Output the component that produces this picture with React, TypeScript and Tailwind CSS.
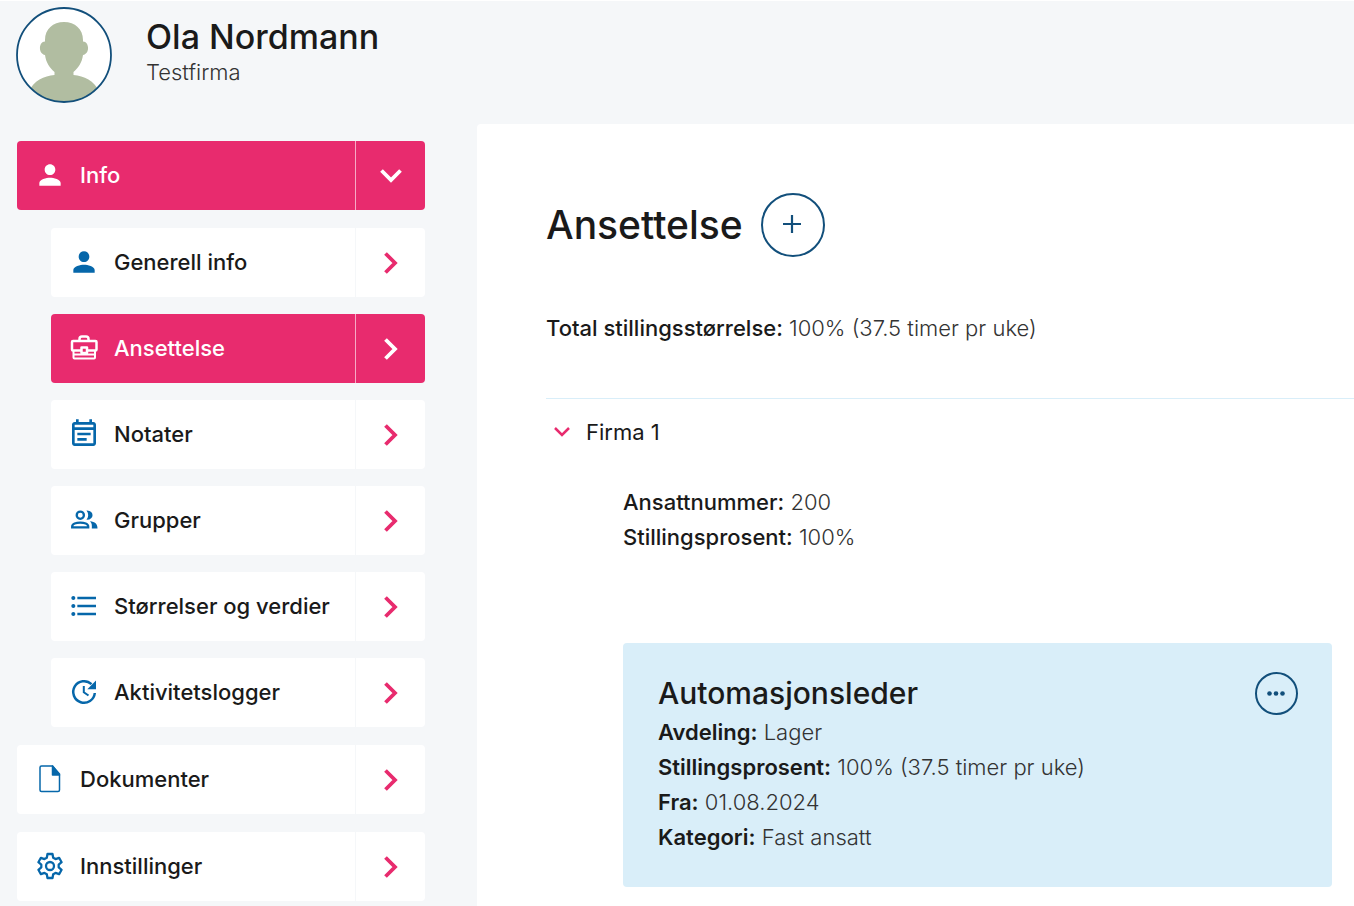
import type { ReactNode } from "react";
import { MdFormatListBulleted, MdOutlineEventNote, MdPerson } from "react-icons/md";

const BriefcaseIcon = () => (
  <svg viewBox="0 0 32 32" className="size-8" fill="none" stroke="currentColor" strokeWidth="2.5" strokeLinejoin="round">
    <path d="M11.500 8V7Q11.500 4.500 14 4.500H18Q20.500 4.500 20.500 7V8" />
    <rect x="4" y="9" width="24.500" height="9.500" rx="1" />
    <path d="M5.500 18.500V25.500Q5.500 26.500 6.500 26.500H26Q27 26.500 27 25.500V18.500M5.500 22.500H27" strokeWidth="2" />
    <rect x="13.500" y="15.500" width="5.500" height="5.500" className="fill-[#e82b6e]" />
  </svg>
);

const GroupIcon = () => (
  <svg viewBox="0 0 32 32" className="size-8" fill="none" stroke="currentColor" strokeWidth="2.3">
    <circle cx="12.300" cy="11.200" r="3.600" />
    <path d="M4.200 23.400V22.500C4.200 17.200 20.200 17.200 20.200 22.500V23.400Z" />
    <path
      d="M18.500 6.500C26.600 6 26.600 16.200 18.500 15.800C20.800 13 20.800 9.300 18.500 6.500ZM22 17.300C27 17.800 29.500 20 29.500 24.500H23.800C24 21 24 19.500 22 17.300Z"
      fill="currentColor"
      stroke="none"
    />
  </svg>
);

const UpdateIcon = () => (
  <svg viewBox="0 0 32 32" className="size-8" fill="none" stroke="currentColor" strokeWidth="2.5">
    <path d="M26.800 17A10.800 10.800 0 1 1 23.500 8.200" />
    <path d="M28 4.500V13.300H19.300Z" fill="currentColor" stroke="none" />
    <path d="M15.800 10V16.200L20.500 19.500" strokeWidth="2" />
  </svg>
);

const DocumentIcon = () => (
  <svg viewBox="0 0 32 32" className="size-8" fill="none" stroke="currentColor" strokeWidth="1.5" strokeLinejoin="round">
    <path d="M7.500 3H18.500L25.500 11V27Q25.500 28.500 24 28.500H7.500Q6 28.500 6 27V4.500Q6 3 7.500 3Z" />
    <path d="M18.500 3V12H25.500Z" fill="currentColor" />
  </svg>
);

const GearIcon = () => (
  <svg viewBox="0 0 32 32" className="size-8" fill="none" stroke="currentColor" strokeWidth="2.3" strokeLinejoin="round">
    <path d="M13.500 4H18.500L19.200 7.800L21.500 9.100L25.100 7.800L27.600 12.200L24.700 14.700V17.300L27.600 19.800L25.100 24.200L21.500 22.900L19.200 24.200L18.500 28H13.500L12.800 24.200L10.500 22.900L6.900 24.200L4.400 19.800L7.300 17.300V14.700L4.400 12.200L6.900 7.800L10.500 9.100L12.800 7.800Z" />
    <circle cx="16" cy="16" r="4" />
  </svg>
);

const Chevron = ({ down = false }: { down?: boolean }) => (
  <svg viewBox="0 0 24 24" className="size-6" fill="none" stroke="currentColor" strokeWidth="3.8">
    <path d={down ? "M2.500 6.500L12 16L21.500 6.500" : "M6.500 2.500L16 12L6.500 21.500"} />
  </svg>
);

type NavItemProps = {
  icon: ReactNode;
  label: string;
  active?: boolean;
  open?: boolean;
};

const NavItem = ({ icon, label, active = false, open = false }: NavItemProps) => (
  <div
    className={
      active
        ? "flex h-[69px] overflow-hidden rounded bg-[#e82b6e] text-white"
        : "flex h-[69px] overflow-hidden rounded bg-white text-[#1a1a1a]"
    }
  >
    <a href="#" className="flex min-w-0 flex-1 items-center gap-3.5 pl-[17px] text-[22px] font-medium">
      <span className={active ? "shrink-0 pb-0.5 text-white" : "shrink-0 pb-0.5 text-[#0667aa]"}>{icon}</span>
      <span className="whitespace-nowrap">{label}</span>
    </a>
    <button
      type="button"
      aria-label={`Vis ${label}`}
      className={
        active
          ? "flex w-[70px] items-center justify-center border-l border-white/60"
          : "flex w-[70px] items-center justify-center border-l border-[#f5f7f9] text-[#e82b6e]"
      }
    >
      <Chevron down={open} />
    </button>
  </div>
);

const Header = () => (
  <header className="flex h-[124px] items-start gap-[34px] border-t border-white pl-4 pt-1.5">
    <svg viewBox="0 0 96 96" className="size-24 shrink-0" role="img" aria-label="Profilbilde">
      <defs>
        <clipPath id="avatar">
          <circle cx="48" cy="48" r="47" />
        </clipPath>
      </defs>
      <circle cx="48" cy="48" r="47" fill="#fff" />
      <g fill="#b1bda1" clipPath="url(#avatar)">
        <path d="M29 33C29 22 37 15 48 15S67 22 67 33V34.500C73.500 34.500 74 47 67 48C66 56 62 61 57.500 65V68C68 69 78 73 84 86V96H12V86C18 73 28 69 38.500 68V65C34 61 30 56 29 48C22 47 22.500 34.500 29 34.500Z" />
      </g>
      <circle cx="48" cy="48" r="47" fill="none" stroke="#124f7b" strokeWidth="1.800" />
    </svg>
    <div className="pt-2.5">
      <h1 className="text-[34px] leading-10 font-medium">Ola Nordmann</h1>
      <p className="text-[22px] leading-[30px] font-light text-[#333]">Testfirma</p>
    </div>
  </header>
);

const Sidebar = () => (
  <nav className="mt-[17px] flex w-[408px] shrink-0 flex-col gap-[18px]">
    <NavItem icon={<MdPerson size={32} />} label="Info" active open />
    <div className="flex flex-col gap-[17px] pl-[34px]">
      <NavItem icon={<MdPerson size={32} />} label="Generell info" />
      <NavItem icon={<BriefcaseIcon />} label="Ansettelse" active />
      <NavItem icon={<MdOutlineEventNote size={32} />} label="Notater" />
      <NavItem icon={<GroupIcon />} label="Grupper" />
      <NavItem icon={<MdFormatListBulleted size={32} />} label="Størrelser og verdier" />
      <NavItem icon={<UpdateIcon />} label="Aktivitetslogger" />
    </div>
    <NavItem icon={<DocumentIcon />} label="Dokumenter" />
    <NavItem icon={<GearIcon />} label="Innstillinger" />
  </nav>
);

const Field = ({ label, value, bold = false }: { label: string; value: string; bold?: boolean }) => (
  <p className="text-[22px] leading-[35px] font-light text-[#333]">
    <span className={bold ? "font-semibold text-[#1a1a1a]" : "font-medium text-[#1a1a1a]"}>{label}</span> {value}
  </p>
);

const EmploymentCard = () => (
  <article className="mt-[88px] mr-[22px] flex items-start justify-between rounded bg-[#d9eef9] pt-[29px] pr-[34px] pb-8 pl-[35px]">
    <div>
      <h3 className="text-[30px] leading-[43px] font-medium">Automasjonsleder</h3>
      <Field label="Avdeling:" value="Lager" bold />
      <Field label="Stillingsprosent:" value="100% (37.5 timer pr uke)" bold />
      <Field label="Fra:" value="01.08.2024" bold />
      <Field label="Kategori:" value="Fast ansatt" bold />
    </div>
    <button
      type="button"
      aria-label="Flere valg"
      className="flex size-[43px] shrink-0 items-center justify-center rounded-full border-2 border-[#124f7b] text-[#124f7b]"
    >
      <svg viewBox="0 0 20 6" className="h-1.5 w-5" fill="currentColor">
        <circle cx="2.500" cy="2.500" r="2.300" />
        <circle cx="9" cy="2.500" r="2.300" />
        <circle cx="15.500" cy="2.500" r="2.300" />
      </svg>
    </button>
  </article>
);

const App = () => {
  return (
    <div className="min-h-screen overflow-hidden bg-[#f5f7f9] font-['Inter','Noto_Sans',sans-serif] text-[#1a1a1a]">
      <Header />
      <div className="flex gap-[52px] pl-[17px]">
        <Sidebar />
        <main className="min-w-0 flex-1 rounded-tl bg-white pt-[69px] pb-[19px] pl-[69px]">
          <div className="flex items-center gap-[18px]">
            <h2 className="text-[39px] leading-[64px] font-medium">Ansettelse</h2>
            <button
              type="button"
              aria-label="Legg til ansettelse"
              className="flex size-16 items-center justify-center rounded-full border-2 border-[#124f7b] text-[#124f7b]"
            >
              <svg viewBox="0 0 20 20" className="size-5" stroke="currentColor" strokeWidth="2.200">
                <path d="M9 0V18M0 9H18" />
              </svg>
            </button>
          </div>
          <div className="mt-[54px] mb-[52px]">
            <Field label="Total stillingsstørrelse:" value="100% (37.5 timer pr uke)" />
          </div>
          <section className="border-t border-[#d9eef9] pt-4">
            <button type="button" className="flex items-center gap-4 pl-2 text-[22px] leading-[35px]">
              <svg viewBox="0 0 16 16" className="size-4 text-[#e82b6e]" fill="none" stroke="currentColor" strokeWidth="2.500">
                <path d="M1 3L8 10L15 3" />
              </svg>
              Firma 1
            </button>
            <div className="mt-[35px] pl-[77px]">
              <Field label="Ansattnummer:" value="200" />
              <Field label="Stillingsprosent:" value="100%" />
              <EmploymentCard />
            </div>
          </section>
        </main>
      </div>
    </div>
  );
};

export default App;
